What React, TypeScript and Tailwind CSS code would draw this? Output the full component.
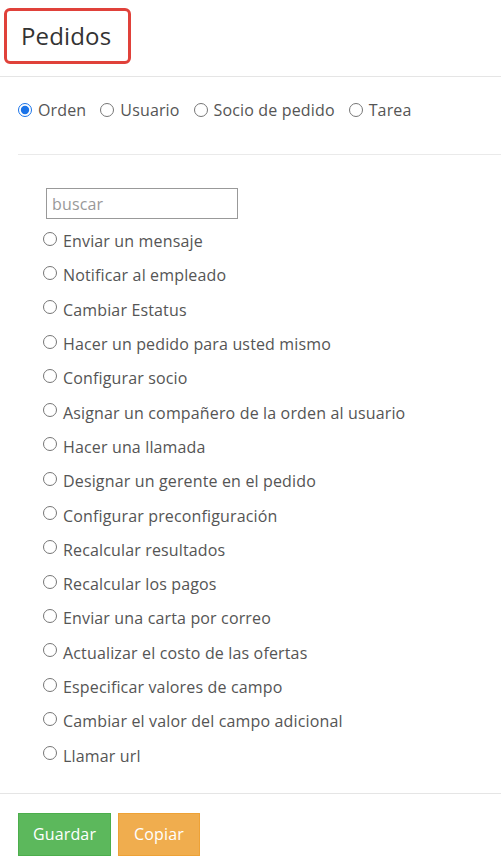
import { useState } from "react";

const actions = [
  "Enviar un mensaje",
  "Notificar al empleado",
  "Cambiar Estatus",
  "Hacer un pedido para usted mismo",
  "Configurar socio",
  "Asignar un compañero de la orden al usuario",
  "Hacer una llamada",
  "Designar un gerente en el pedido",
  "Configurar preconfiguración",
  "Recalcular resultados",
  "Recalcular los pagos",
  "Enviar una carta por correo",
  "Actualizar el costo de las ofertas",
  "Especificar valores de campo",
  "Cambiar el valor del campo adicional",
  "Llamar url",
];

const tabs = ["Orden", "Usuario", "Socio de pedido", "Tarea"];

export default function App() {
  const [tab, setTab] = useState("Orden");
  const [action, setAction] = useState("");

  return (
    <div className="w-[501px] h-[859px] bg-white font-['Open_Sans',sans-serif] text-[#555] tracking-[0.15px] overflow-hidden">
      <div className="pt-2 pb-3 px-1 border-b border-[#e5e5e5]">
        <div className="w-[127px] h-[56px] border-[3px] border-[#e0413a] rounded-md flex items-center pl-[14px]">
          <h1 className="text-[24px] text-[#333] font-normal">Pedidos</h1>
        </div>
      </div>

      <div className="ml-[18px]">
        <div className="flex items-center h-[78px] pb-[12px] border-b border-[#eaeaea]">
          {tabs.map((t) => (
            <label key={t} className="flex items-center mr-[14px] text-[16px] cursor-pointer">
              <input
                type="radio"
                name="tab"
                checked={tab === t}
                onChange={() => setTab(t)}
                className="w-[14px] h-[14px] mr-[6px] accent-[#1a73e8]"
              />
              {t}
            </label>
          ))}
        </div>

        <div className="pl-[28px] pt-[33px] pb-[20px]">
          <input
            type="text"
            placeholder="buscar"
            className="w-[192px] h-[31px] border border-[#999] px-[5px] text-[16px] placeholder-[#999] outline-none mb-[5px]"
          />
          {actions.map((a) => (
            <label key={a} className="flex items-center h-[34.3px] text-[16px] cursor-pointer">
              <input
                type="radio"
                name="action"
                checked={action === a}
                onChange={() => setAction(a)}
                className="w-[14px] h-[14px] -ml-[3px] mr-[6px] mb-[5px]"
              />
              {a}
            </label>
          ))}
        </div>
      </div>

      <div className="border-t border-[#e5e5e5] pt-[19px] pl-[18px] flex gap-[7px]">
        <button className="w-[93px] h-[43px] bg-[#5cb85c] border border-[#4cae4c] text-white text-[16px]">
          Guardar
        </button>
        <button className="w-[82px] h-[43px] bg-[#f0ad4e] border border-[#eea236] text-white text-[16px]">
          Copiar
        </button>
      </div>
    </div>
  );
}
